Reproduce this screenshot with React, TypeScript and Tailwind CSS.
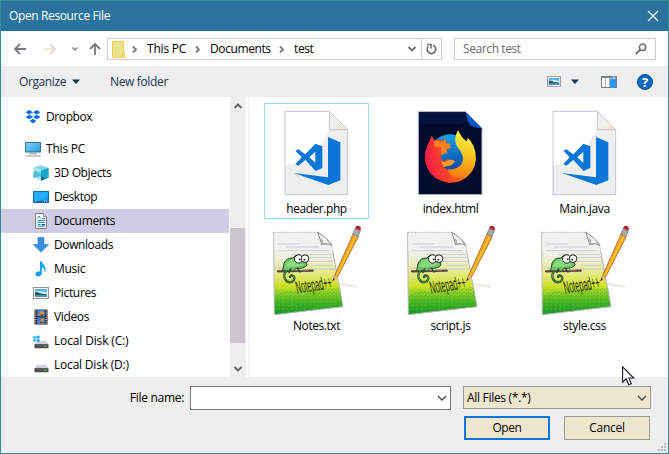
import React from "react";

function Chevron({ className, dir = "right", thin }: { className?: string; dir?: "right" | "down" | "up"; thin?: boolean }) {
  const d = dir === "right" ? "M3 2.5 L6 5.5 L3 8.5" : dir === "down" ? (thin ? "M1 3 L5 7 L9 3" : "M1.5 3 L5 6.5 L8.5 3") : "M1.5 7 L5 3.5 L8.5 7";
  return (
    <svg viewBox="0 0 10 10" className={`h-[10px] w-[10px] shrink-0 ${className ?? ""}`} fill="none" stroke="currentColor" strokeWidth={thin ? 1.3 : 1.8}>
      <path d={d} />
    </svg>
  );
}

function PictureIcon({ className }: { className?: string }) {
  return (
    <svg viewBox="0 0 16 12" className={className}>
      <rect x=".5" y=".5" width="15" height="11" fill="#fff" stroke="#8d9199" />
      <rect x="2" y="2" width="12" height="8" fill="#5aaef0" />
      <path d="M2 4.5 Q6 3 14 5.5 V7 H2z" fill="#d6ecfa" />
      <path d="M2 5 Q5 4.5 8 6.6 L14 7.4 V8.5 H2z" fill="#285c51" />
      <rect x="2" y="8" width="12" height="2" fill="#4b93bd" />
    </svg>
  );
}

function Drive() {
  return (
    <>
      <path d="M4 8 H13 L15.5 11.5 H1.5z" fill="#cfcdda" />
      <rect x="1.5" y="11" width="14" height="4.2" rx=".5" fill="#4a4d50" />
      <rect x="2" y="11.6" width="13" height=".7" fill="#777" />
      <rect x="11.5" y="12.5" width="1.6" height="1.4" fill="#3ef04a" />
    </>
  );
}

const sideIcons: Record<string, React.ReactNode> = {
  dropbox: (
    <g fill="#0a6cf0">
      <path d="M4.3 1 L8 3.2 L4.3 5.5 L.5 3.2z M11.7 1 L15.5 3.2 L11.7 5.5 L8 3.2z M4.3 5.8 L8 8 L4.3 10.3 L.5 8z M11.7 5.8 L15.5 8 L11.7 10.3 L8 8z M8 9.8 L11.4 12 L8 14.6 L4.6 12z" />
    </g>
  ),
  pc: (
    <>
      <rect x=".5" y="1.5" width="15" height="9.5" fill="url(#screenBlue)" stroke="#3d6f91" />
      <path d="M6 11.5h4v1H6z" fill="#8aa" />
      <path d="M4 12.3h8v.9H4z M.5 14.6h15v1H.5z" fill="#8f9b9f" />
    </>
  ),
  cube: (
    <>
      <path d="M8 .3 L15.7 2.7 L8 5.3 L.3 2.7z" fill="#7fdcea" />
      <path d="M.3 2.7 L8 5.3 V15.8 L.3 12.8z" fill="#a3e4ef" />
      <path d="M8 5.3 L15.7 2.7 V12.8 L8 15.8z" fill="#1ba6c8" />
      <path d="M2 6 L8 8 V11 L.3 12.8 V9z" fill="#51bfd6" />
      <path d="M8 11 L13 13.8 L8 15.8z" fill="#0b6d92" />
    </>
  ),
  desktop: (
    <>
      <rect x=".5" y="2.5" width="15" height="11" fill="url(#deskBlue)" stroke="#0b6bb5" />
      <path d="M1 12h14v1.4H1z" fill="#0b62a8" />
      <path d="M2 12.3h1v.8H2z M11 12.3h1v.8h-1z M13 12.3h1v.8h-1z" fill="#fff" />
    </>
  ),
  doc: (
    <>
      <path d="M2.5 .5 H10.5 L13.5 3.5 V15.5 H2.5z" fill="#fff" stroke="#777b80" />
      <path d="M10.5 .5 V3.5 H13.5" fill="#ddd" stroke="#777b80" strokeWidth=".8" />
      <path d="M4.5 5.5 L6 3 L7.5 5.5 M9 5.5h3 M4.5 7.5h7.5 M4.5 9.5h7.5 M4.5 11.5h3 M4.5 13.2h7.5" stroke="#2787cf" fill="none" />
      <path d="M8.5 11h3.5v1.4H8.5z" fill="#24566b" />
    </>
  ),
  down: <path d="M5 .5 H11 V7.5 H15.7 L8 15.3 L.3 7.5 H5z" fill="#3a8fe4" stroke="#2b78c8" strokeWidth=".6" />,
  music: (
    <>
      <path d="M7 .3 H8.8 C9 3.5 13.5 4.6 12.6 10.3 L11.5 11 C12 8 10.5 6.8 8.8 6.2 V12.5 H7z" fill="#12a0ee" />
      <ellipse cx="5.6" cy="12.8" rx="3.2" ry="2.5" fill="#12a0ee" transform="rotate(-18 5.6 12.8)" />
    </>
  ),
  video: (
    <>
      <rect x="1.5" y=".5" width="13" height="15" fill="#252525" />
      <rect x="4.2" y="1" width="7.6" height="6.5" fill="#477bdc" />
      <rect x="4.2" y="8.5" width="7.6" height="6.5" fill="#477bdc" />
      <path d="M5 6 L8.5 2 L11.5 3.4 L10 6z M6 13.5 L9 9.5 L11.5 10 L10 13z" fill="#d69b27" />
      <path d="M7.5 5.2h2.2v2H7.5z M7 12.3h2.5v2H7z" fill="#913a26" />
      <path d="M2.8 1.2V15 M13.2 1.2V15" stroke="#e5e5e5" strokeWidth="1.2" strokeDasharray="1 1.2" />
    </>
  ),
  diskc: (
    <>
      <Drive />
      <path d="M.3 3.2h2.6v2.2H.3z M3.6 2.8h3v2.6h-3z M.3 6.2h2.6v2.2H.3z M3.6 6.2h3v2.6h-3z" fill="#12a9f5" />
    </>
  ),
  diskd: <Drive />,
};

const places = [
  { name: "3D Objects", icon: "cube", tracking: "tracking-[-0.35px]" },
  { name: "Desktop", icon: "desktop", tracking: "tracking-[-0.45px]" },
  { name: "Documents", icon: "doc", tracking: "tracking-[-0.35px]" },
  { name: "Downloads", icon: "down", tracking: "tracking-[-0.4px]" },
  { name: "Music", icon: "music", tracking: "tracking-[-0.3px]" },
  { name: "Pictures", icon: "picture", tracking: "tracking-[-0.35px]" },
  { name: "Videos", icon: "video", tracking: "tracking-[-0.35px]" },
  { name: "Local Disk (C:)", icon: "diskc", tracking: "tracking-[-0.15px]" },
  { name: "Local Disk (D:)", icon: "diskd", tracking: "tracking-[-0.2px]" },
];

function SideRow({ name, icon, tracking, root }: { name: string; icon: string; tracking: string; root?: boolean }) {
  return (
    <div className={`flex h-6 items-center gap-[5px] ${root ? "pl-6" : "pl-8"} ${name === "Documents" ? "bg-[#cfcde5]" : ""}`}>
      {icon === "picture" ? (
        <PictureIcon className="h-3 w-4 shrink-0" />
      ) : (
        <svg viewBox="0 0 16 16" className="h-4 w-4 shrink-0">{sideIcons[icon]}</svg>
      )}
      <span className={`whitespace-nowrap ${tracking}`}>{name}</span>
    </div>
  );
}

function CodeIcon() {
  return (
    <svg viewBox="27 15 315 276" className="h-[92px] w-[105px]">
      <path d="M90 40 H223 L278 95 V290 H90z" fill="#fff" />
      <path d="M90 202 L165 190 L223 95 H278 V290 H90z" fill="#eeeeef" />
      <path d="M223 40 V95 H278z" fill="#eeeeef" />
      <path d="M245 88 L262 82 L276 94 H232z" fill="#f0e8d2" />
      <path d="M90 40 H223 L278 95 V290 H90z M223 40 V95 H278" fill="none" stroke="#c6c3d3" strokeWidth="3" />
      <path d="M219 117 L256 133 V247 L220 261 L117 225 L219 238z" fill="#0a76d8" />
      <path fillRule="evenodd" d="M181 137 L202 145 V210 L182 219 L151 186 L130 203 L121 198 L140 178 L121 158 L130 154 L151 169z M181 161 L163 178 L181 195z" fill="#0a76d8" />
    </svg>
  );
}

function FirefoxIcon() {
  return (
    <svg viewBox="9 15 315 276" className="h-[92px] w-[105px]">
      <path d="M70 41 H212 L261 91 V290 H70z" fill="#020b2b" stroke="#b8bac6" strokeWidth="3" />
      <path d="M72 43 H211 L214 72 L180 80 H72z" fill="#04143f" />
      <path d="M212 42 L260 91 Q240 90 222 78 Q214 64 212 42z" fill="#0d56c9" />
      <path d="M213 58 Q220 84 253 90 L224 86z" fill="#0a2b75" />
      <circle cx="165" cy="172" r="63" fill="url(#foxBlue)" />
      <path d="M110 113 L119 127 Q135 122 145 128 L154 121 L153 134 L167 139 L160 153 L148 160 L139 171 Q134 185 145 190 L157 184 L178 188 L169 201 L144 205 Q157 221 180 214 Q197 211 207 190 L223 163 L238 165 Q249 201 222 231 Q197 257 160 254 Q116 249 98 213 Q81 176 98 141z" fill="url(#foxRed)" />
      <path d="M189 96 Q173 126 187 147 Q212 174 200 198 Q186 216 160 214 Q158 236 192 240 Q225 238 239 204 Q251 161 225 126 L218 119 L216 130 Q201 123 189 96z" fill="url(#foxYellow)" />
      <path d="M137 171 L157 164 L153 152 L168 150 L161 135 L151 137 L153 122 L142 131 L120 127 L118 145 L139 150z" fill="#fb831c" />
      <path d="M137 188 Q149 196 159 187 Q170 182 181 190 L169 202 L146 207z" fill="#f79b29" />
    </svg>
  );
}

function NotepadIcon() {
  return (
    <svg viewBox="12 6 315 276" className="h-[92px] w-[105px] overflow-visible">
      <path d="M223 191 L291 202 L292 210 L220 200z" fill="#eeece7" />
      <path d="M41 43 H175 L214 77 L249 266 L43 290z" fill="url(#padGreen)" stroke="#b5b5ba" strokeWidth="3" />
      <path d="M42 44 H174 L178 80 L217 82 L220 97 L42 100z" fill="#efeff1" opacity=".7" />
      <path d="M43 234 Q92 207 130 229 Q181 206 242 211 L248 264 L44 286z" fill="url(#padGrain)" />
      <path d="M53 78H120 M78 87H177 M55 98H206 M92 109H217 M110 119H222 M145 130H225 M157 142H218 M147 153H225 M50 150H70 M50 184H65" stroke="#b9bfd8" strokeWidth="2" />
      <path d="M173 42 L185 79 Q207 74 216 84 L199 61z" fill="#f1f1f1" stroke="#8c8c95" strokeWidth="3" />
      <path d="M181 62 L188 69 L184 79 L199 77" fill="none" stroke="#a5a5aa" strokeWidth="4" />
      <path d="M48 42H169" stroke="#fff" strokeWidth="3" strokeDasharray="5 4" />
      <path d="M54 160 L158 158" stroke="#5b4640" strokeWidth="7" strokeLinecap="round" />
      <path d="M65 156 L144 158" stroke="#a28a7d" strokeWidth="2" />
      <path d="M68 158 L72 137 Q78 119 99 120 L107 112 Q119 108 126 118 Q142 129 141 141 Q132 153 108 151 L99 161 L91 154 L85 158 Q75 160 68 158z" fill="#6fc267" stroke="#28482a" strokeWidth="3" />
      <path d="M76 148 Q79 128 97 124 L112 122 Q118 135 134 138 Q122 147 101 146z" fill="#88dc7e" />
      <path d="M79 158 Q70 169 74 180 Q81 197 97 191 Q107 182 100 174 Q89 169 90 180" fill="none" stroke="#2d532c" strokeWidth="7" />
      <path d="M79 158 Q70 169 74 180 Q81 197 97 191 Q107 182 100 174" fill="none" stroke="#5cab50" strokeWidth="2.5" />
      <path d="M93 151 L86 166 M112 149 L118 161 L128 160" fill="none" stroke="#304d2d" strokeWidth="4" />
      <circle cx="116" cy="123" r="12.5" fill="#fff" stroke="#202020" strokeWidth="3" />
      <circle cx="135" cy="122" r="11.5" fill="#fff" stroke="#202020" strokeWidth="3" />
      <circle cx="119" cy="124" r="2.6" fill="#111" /><circle cx="133" cy="125" r="2.6" fill="#111" />
      <text x="0" y="0" fontFamily="Liberation Sans, Arial, sans-serif" fontSize="54" textLength="108" lengthAdjust="spacingAndGlyphs" transform="translate(112 227) rotate(-9) skewX(4)" fill="#1c3014">Notepad++</text>
      <path d="M218 188 L224 172 L279 48 L295 56 L234 175z" fill="#f2a421" stroke="#8d571f" strokeWidth="2" />
      <path d="M230 174 L288 53" stroke="#ffc636" strokeWidth="4" />
      <path d="M218 189 L224 173 L234 177z" fill="#e0b37b" /><path d="M217 190 L220 181 L225 183z" fill="#2b1710" />
      <path d="M278 48 L286 31 L301 38 L294 56z" fill="#a9a6a9" stroke="#777" strokeWidth="2" />
      <path d="M285 31 L289 24 Q299 21 303 30 L301 38z" fill="#b32733" />
    </svg>
  );
}

const files = [
  { name: "header.php", icon: <CodeIcon />, selected: true, tracking: "tracking-[-0.45px]" },
  { name: "index.html", icon: <FirefoxIcon />, tracking: "tracking-[-0.4px]" },
  { name: "Main.java", icon: <CodeIcon />, tracking: "tracking-[-0.3px]" },
  { name: "Notes.txt", icon: <NotepadIcon />, tracking: "tracking-[-0.45px]" },
  { name: "script.js", icon: <NotepadIcon />, tracking: "tracking-[-0.3px]" },
  { name: "style.css", icon: <NotepadIcon />, tracking: "tracking-[-0.35px]" },
];

function Definitions() {
  return (
    <svg className="absolute h-0 w-0">
      <defs>
        <linearGradient id="screenBlue" x1="0" y1="0" x2="1" y2="1"><stop stopColor="#81d5fa" /><stop offset="1" stopColor="#2799df" /></linearGradient>
        <linearGradient id="deskBlue" x1="0" y1="0" x2="1" y2="1"><stop stopColor="#2aa7f4" /><stop offset=".5" stopColor="#23b1fb" /><stop offset="1" stopColor="#118bdf" /></linearGradient>
        <linearGradient id="foxBlue" x1=".4" y1="0" x2=".5" y2="1"><stop stopColor="#0ca2ef" /><stop offset="1" stopColor="#103991" /></linearGradient>
        <linearGradient id="foxRed" x1="0" y1=".6" x2="1" y2=".4"><stop stopColor="#ec174d" /><stop offset=".45" stopColor="#fb4c23" /><stop offset="1" stopColor="#f7a411" /></linearGradient>
        <linearGradient id="foxYellow" x1=".5" y1="0" x2=".4" y2="1"><stop stopColor="#fff547" /><stop offset=".5" stopColor="#f5c51f" /><stop offset="1" stopColor="#f8790e" /></linearGradient>
        <linearGradient id="padGreen" x1="0" y1="0" x2="0" y2="1"><stop stopColor="#f7f7f7" /><stop offset=".3" stopColor="#efefdf" /><stop offset=".5" stopColor="#e6e985" /><stop offset=".65" stopColor="#cee126" /><stop offset=".85" stopColor="#48b822" /><stop offset="1" stopColor="#159328" /></linearGradient>
        <pattern id="padGrain" width="13" height="11" patternUnits="userSpaceOnUse"><path d="M0 1h4v3H0z M7 5h4v4H7z" fill="#13922a" opacity=".55" /><path d="M4 7h3v3H4z" fill="#7cd134" opacity=".6" /></pattern>
      </defs>
    </svg>
  );
}

export default function App() {
  return (
    <div className="relative flex h-[454px] w-[669px] flex-col overflow-hidden border border-[#328b95] bg-[#eee] font-['Open_Sans','Noto_Sans',sans-serif] text-[12px] leading-4 text-black">
      <Definitions />
      <header className="flex h-[30px] shrink-0 items-center justify-between bg-[#2a739d] pr-[9px] pl-2 text-white">
        <h1 className="tracking-[-0.38px]">Open Resource File</h1>
        <svg viewBox="0 0 12 12" className="h-3 w-3" fill="none" stroke="white" strokeWidth="1.1"><path d="M1 1 L11 11 M11 1 L1 11" /></svg>
      </header>

      <div className="flex h-[35px] shrink-0 items-center bg-white pt-px pl-[13px]">
        <svg viewBox="0 0 12 12" className="h-3 w-3" fill="none" stroke="#77787b" strokeWidth="1.8"><path d="M12 6H1 M6 1L1 6l5 5" /></svg>
        <svg viewBox="0 0 12 12" className="ml-[18px] h-3 w-3" fill="none" stroke="#dcd8e2" strokeWidth="1.8"><path d="M0 6H11" stroke="#efe5d0" /><path d="M6 1l5 5-5 5" /></svg>
        <svg viewBox="0 0 6 6" className="ml-4 h-[6px] w-[6px]" fill="none" stroke="#858585" strokeWidth="1.5"><path d="M.5 1.5L3 4l2.5-2.5" /></svg>
        <svg viewBox="0 0 12 12" className="ml-[11px] h-3 w-3" fill="none" stroke="#77787b" strokeWidth="1.8"><path d="M6 12V1 M1 6l5-5 5 5" /></svg>
        <div className="ml-[6px] flex h-[22px] w-[335px] items-center border border-[#cdcae2] pl-1">
          <svg viewBox="0 0 13 17" className="h-[17px] w-[13px] shrink-0"><path d="M.5.5h11v10h1v6H.5z" fill="#e9e48c" stroke="#f0cd45" /><path d="M10.5 11v5.5" stroke="#f0cd45" /></svg>
          <Chevron className="ml-[5px] text-[#7a7a7a]" />
          <span className="ml-[7px] w-[41px] whitespace-nowrap tracking-[-0.2px]">This PC</span>
          <Chevron className="ml-[5px] text-[#7a7a7a]" />
          <span className="ml-[7px] w-[62px] whitespace-nowrap tracking-[-0.4px]">Documents</span>
          <Chevron className="ml-[5px] text-[#7a7a7a]" />
          <span className="ml-[7px] tracking-[-0.4px]">test</span>
          <Chevron dir="down" className="mr-1 ml-auto text-[#707070]" />
          <div className="flex h-full w-5 items-center justify-center border-l border-[#cdcae2]">
            <svg viewBox="0 0 12 12" className="h-3 w-3" fill="none" stroke="#717171" strokeWidth="1.7"><path d="M2.2 3.4A4.3 4.3 0 1 0 7 2.2" /><path d="M1 1.5h4v4" strokeWidth="1.6" /></svg>
          </div>
        </div>
        <div className="ml-3 flex h-[22px] w-[202px] items-center justify-between border border-[#cdcae2] pr-2 pl-2 text-[#6b6b6b]">
          <span className="tracking-[-0.4px]">Search test</span>
          <svg viewBox="0 0 12 12" className="h-3 w-3" fill="none" stroke="#6f6f6f" strokeWidth="1.5"><circle cx="7.6" cy="4.2" r="3.2" /><path d="M5.2 6.6L.8 11" strokeWidth="1.8" /></svg>
        </div>
      </div>

      <div className="flex h-[31px] shrink-0 items-center pl-[18px] text-[#1c3554]">
        <span className="w-[47px] tracking-[-0.4px]">Organize</span>
        <svg viewBox="0 0 8 5" className="ml-[6px] h-[5px] w-2"><path d="M0 .5h8L4 5z" fill="#193653" /></svg>
        <span className="ml-[30px] w-[60px] whitespace-nowrap tracking-[-0.35px]">New folder</span>
        <PictureIcon className="ml-auto h-[11px] w-[14px]" />
        <svg viewBox="0 0 8 5" className="ml-[10px] h-[5px] w-2"><path d="M0 .5h8L4 5z" fill="#193653" /></svg>
        <svg viewBox="0 0 16 12" className="ml-[22px] h-3 w-4"><rect x=".5" y=".5" width="15" height="11" fill="#fff" stroke="#79818b" /><path d="M1 1h14v1H1z" fill="#79818b" /><path d="M4.5 2v9 M8.5 2v9" stroke="#a8afb5" /><path d="M9 2.5h6V12H9z" fill="#3496f4" /><path d="M12 1h2" stroke="#fff" strokeDasharray="1 .5" /></svg>
        <div className="mr-[15px] ml-5 flex h-4 w-4 items-center justify-center rounded-full border border-[#064d95] bg-[#0868be] text-[13px] leading-3 font-bold text-white">?</div>
      </div>

      <main className="flex h-[280px] shrink-0 bg-white">
        <nav className="w-[228px] pt-2">
          <SideRow name="Dropbox" icon="dropbox" tracking="tracking-[-0.4px]" root />
          <div className="h-2" />
          <SideRow name="This PC" icon="pc" tracking="tracking-[-0.2px]" root />
          {places.map((place) => <SideRow key={place.name} {...place} />)}
        </nav>
        <div className="ml-px flex w-4 flex-col items-center bg-[#eee] text-[#626262]">
          <div className="flex h-[131px] pt-1"><Chevron dir="up" /></div>
          <div className="mr-px h-[115px] w-[15px] bg-[#cdc6cf]" />
          <div className="flex grow items-end pb-[3px]"><Chevron dir="down" /></div>
        </div>
        <div className="ml-[2px] w-px bg-[#eee]" />
        <section className="ml-[15px] grid h-fit grid-cols-[105px_105px_105px] gap-x-[29px] pt-[6px]">
          {files.map((file) => (
            <div key={file.name} className="relative flex h-[117px] flex-col items-center">
              {file.selected && <div className="absolute inset-x-0 top-0 h-[116px] border border-[#99dcf5]" />}
              {file.icon}
              <span className={`mt-[6px] ${file.tracking}`}>{file.name}</span>
            </div>
          ))}
        </section>
      </main>

      <footer className="relative flex grow flex-col pt-[9px]">
        <div className="flex items-start">
          <label className="w-[189px] pt-1 pr-[6px] text-right tracking-[-0.3px]">File name:</label>
          <div className="flex h-6 w-[261px] items-center justify-end border border-[#7b7b7b] bg-white pr-[3px]"><Chevron dir="down" thin className="text-[#444]" /></div>
          <div className="ml-3 flex h-[23px] w-[188px] items-center justify-between border border-[#999999] bg-[#eee7cf] pr-[3px] pl-[3px]"><span className="tracking-[-0.3px]">All Files (*.*)</span><Chevron dir="down" thin className="text-[#444]" /></div>
        </div>
        <div className="mt-[6px] ml-[463px] flex gap-[14px]">
          <button className="h-6 w-[86px] border-2 border-[#0876d8] bg-[#eee7cf] tracking-[-0.4px]">Open</button>
          <button className="h-6 w-[86px] border border-[#9b9b9b] bg-[#eee7cf] tracking-[-0.3px]">Cancel</button>
        </div>
        <svg viewBox="0 0 8 8" className="absolute right-[2px] bottom-[2px] h-2 w-2" fill="#b7b7b7"><path d="M6 0h2v2H6z M3 3h2v2H3z M6 3h2v2H6z M0 6h2v2H0z M3 6h2v2H3z M6 6h2v2H6z" /></svg>
      </footer>

      <svg viewBox="0 0 13 20" className="absolute top-[365px] left-[621px] h-5 w-[13px]"><path d="M.6.8V16.2L4.2 12.8 6.7 18.8 9.3 17.7 6.9 12H11.7z" fill="#fff" stroke="#1b1727" strokeWidth="1.1" /></svg>
    </div>
  );
}
